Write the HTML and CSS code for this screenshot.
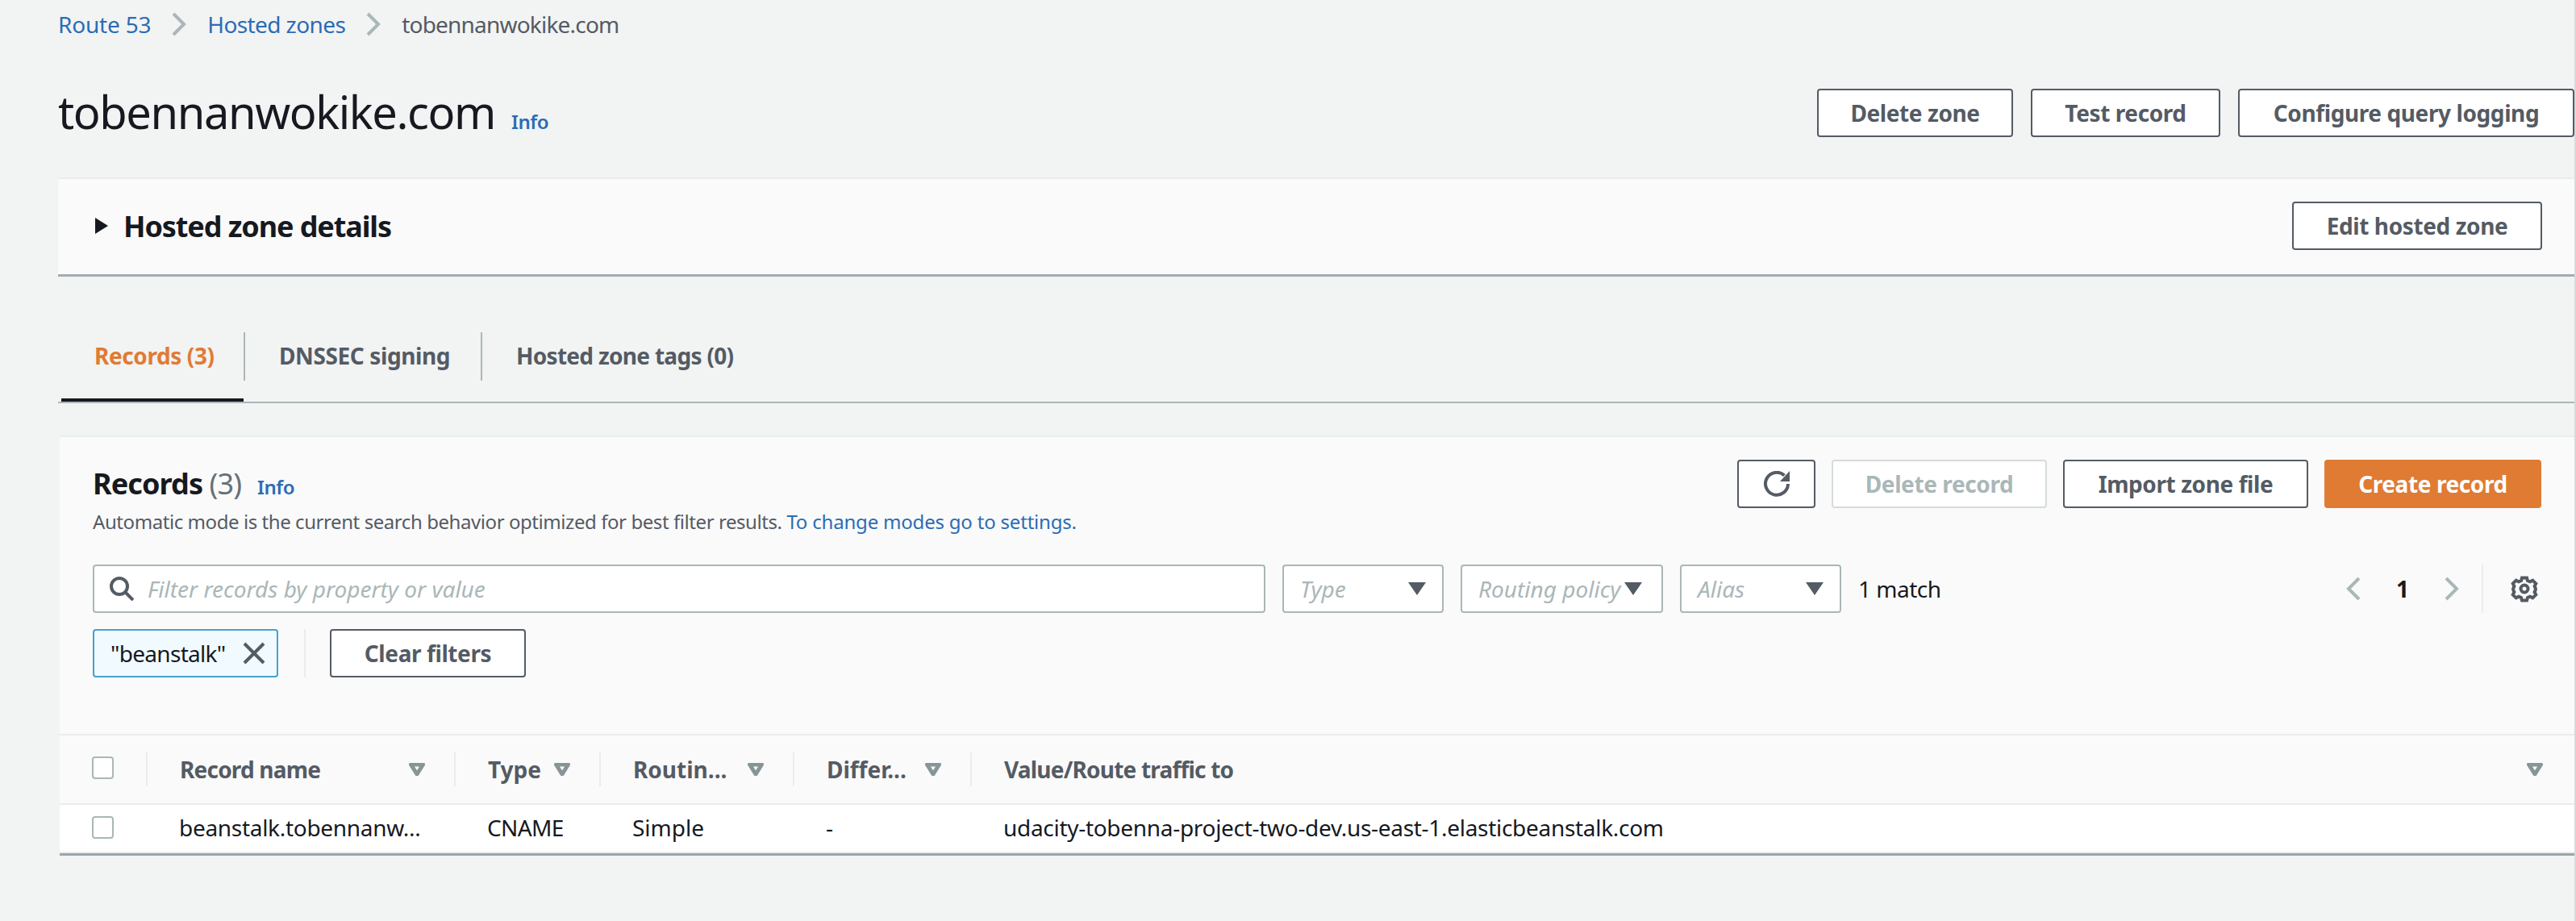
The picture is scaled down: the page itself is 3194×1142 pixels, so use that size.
FILE: index.html
```html
<!DOCTYPE html>
<html lang="en">
<head>
    <meta charset="UTF-8">
    <title>tobennanwokike.com - Route 53</title>
    <link rel="stylesheet" href="styles.css">
</head>
<body>
    <div class="page">
        <nav class="breadcrumb">
            <a href="#" class="crumb-root">Route 53</a>
            <svg class="crumb-sep" viewBox="0 0 20 30"><path d="M3 2l13 13L3 28"/></svg>
            <a href="#" class="crumb-zones">Hosted zones</a>
            <svg class="crumb-sep" viewBox="0 0 20 30"><path d="M3 2l13 13L3 28"/></svg>
            <span class="crumb-current">tobennanwokike.com</span>
        </nav>

        <div class="page-header">
            <div class="title-wrap">
                <h1>tobennanwokike.com</h1>
                <a href="#" class="info">Info</a>
            </div>
            <div class="actions">
                <button class="btn btn-delete-zone">Delete zone</button>
                <button class="btn btn-test">Test record</button>
                <button class="btn btn-logging">Configure query logging</button>
            </div>
        </div>

        <section class="details-panel">
            <div class="details-title">
                <svg class="expand-icon" viewBox="0 0 16 20"><path d="M0 0l16 10L0 20z"/></svg>
                <h2>Hosted zone details</h2>
            </div>
            <button class="btn btn-edit">Edit hosted zone</button>
        </section>

        <div class="tabs">
            <a href="#" class="tab tab-active">Records (3)</a>
            <a href="#" class="tab tab-dnssec">DNSSEC signing</a>
            <a href="#" class="tab tab-tags">Hosted zone tags (0)</a>
        </div>

        <section class="records-card">
            <div class="records-head">
                <div>
                    <div class="records-title">
                        <h2>Records <span class="count">(3)</span></h2>
                        <a href="#" class="info info-small">Info</a>
                    </div>
                    <p class="records-desc">Automatic mode is the current search behavior optimized for best filter results. <a href="#">To change modes go to settings.</a></p>
                </div>
                <div class="records-actions">
                    <button class="btn btn-refresh" aria-label="Refresh">
                        <svg viewBox="0 0 32 32"><path d="M25.500 5.500A14 14 0 1 0 30 16"/><path class="fill" d="M32 0v13H20z"/></svg>
                    </button>
                    <button class="btn btn-disabled">Delete record</button>
                    <button class="btn btn-import">Import zone file</button>
                    <button class="btn btn-primary">Create record</button>
                </div>
            </div>

            <div class="filter-row">
                <div class="search-box">
                    <svg viewBox="0 0 30 30"><circle cx="12" cy="12" r="10"/><path d="M19 19l10 10"/></svg>
                    <span>Filter records by property or value</span>
                </div>
                <div class="select select-type"><span>Type</span><i class="select-caret"></i></div>
                <div class="select select-routing"><span>Routing policy</span><i class="select-caret"></i></div>
                <div class="select select-alias"><span>Alias</span><i class="select-caret"></i></div>
                <span class="match-count">1 match</span>
                <div class="pager">
                    <svg class="pager-arrow" viewBox="0 0 20 30"><path d="M16 2L3 15l13 13"/></svg>
                    <span class="pager-num">1</span>
                    <svg class="pager-arrow" viewBox="0 0 20 30"><path d="M4 2l13 13L4 28"/></svg>
                </div>
                <div class="settings">
                    <svg viewBox="0 0 34 34"><path d="M14 3.500h6l1 3.500 3 1.300 3.300-1.700 4 4-1.700 3.300 1.300 3v1.200l-1.300 3 1.700 3.300-4 4-3.300-1.700-3 1.300-1 3.500h-6l-1-3.500-3-1.300-3.300 1.700-4-4 1.700-3.300-1.300-3v-1.200l1.300-3-1.700-3.300 4-4 3.300 1.700 3-1.300z"/><circle cx="17" cy="17" r="4.500"/></svg>
                </div>
            </div>

            <div class="chip-row">
                <div class="chip">
                    <span>"beanstalk"</span>
                    <svg viewBox="0 0 28 28"><path d="M2 2l24 24M26 2L2 26"/></svg>
                </div>
                <div class="chip-sep"></div>
                <button class="btn btn-clear">Clear filters</button>
            </div>

            <div class="table">
                <div class="table-row table-head">
                    <div class="cell cell-check"><i class="checkbox"></i></div>
                    <div class="cell"><b class="tight">Record name</b><svg class="sort" viewBox="0 0 20 16"><path d="M2.500 2h15L10 14z"/></svg></div>
                    <div class="cell"><b>Type</b><svg class="sort" viewBox="0 0 20 16"><path d="M2.500 2h15L10 14z"/></svg></div>
                    <div class="cell"><b>Routin...</b><svg class="sort" viewBox="0 0 20 16"><path d="M2.500 2h15L10 14z"/></svg></div>
                    <div class="cell"><b>Differ...</b><svg class="sort" viewBox="0 0 20 16"><path d="M2.500 2h15L10 14z"/></svg></div>
                    <div class="cell cell-last"><b class="tight">Value/Route traffic to</b><svg class="sort" viewBox="0 0 20 16"><path d="M2.500 2h15L10 14z"/></svg></div>
                </div>
                <div class="table-row table-body">
                    <div class="cell cell-check"><i class="checkbox"></i></div>
                    <div class="cell"><span class="row-text">beanstalk.tobennanw...</span></div>
                    <div class="cell"><span class="row-cname">CNAME</span></div>
                    <div class="cell"><span>Simple</span></div>
                    <div class="cell"><span>-</span></div>
                    <div class="cell"><span class="row-text">udacity-tobenna-project-two-dev.us-east-1.elasticbeanstalk.com</span></div>
                </div>
            </div>
        </section>
    </div>
</body>
</html>
```

FILE: styles.css
```css
* {
    box-sizing: border-box;
}

html, body {
    margin: 0;
    height: 100%;
}

body {
    background-color: #f2f3f3;
    font-family: "Noto Sans", sans-serif;
    font-size: 28px;
    color: #16191f;
    overflow: hidden;
}

a {
    color: #2b6cb5;
    text-decoration: none;
}

.page {
    padding-left: 72px;
    border-right: 2px solid #d5dbdb;
    height: 100%;
    width: 3194px;
}

/* breadcrumb */
.breadcrumb {
    display: flex;
    align-items: center;
    height: 60px;
    color: #545b64;
}

.crumb-root {
    letter-spacing: -0.2px;
}

.crumb-zones {
    letter-spacing: -0.6px;
}

.crumb-current {
    letter-spacing: -0.8px;
}

.crumb-sep {
    width: 20px;
    height: 30px;
    margin: 0 25px;
}

.crumb-sep path, .pager-arrow path {
    fill: none;
    stroke: #aab7b8;
    stroke-width: 4;
}

/* title row */
.page-header {
    display: flex;
    justify-content: space-between;
    align-items: flex-start;
    height: 160px;
    padding-top: 38px;
}

.title-wrap {
    display: flex;
    align-items: baseline;
    gap: 20px;
}

h1 {
    margin: 0;
    font-size: 56px;
    font-weight: 400;
    line-height: 80px;
    letter-spacing: -1.4px;
}

.info {
    font-size: 24px;
    font-weight: 600;
    letter-spacing: -0.5px;
}

.actions {
    display: flex;
    gap: 22px;
    margin-top: 12px;
}

.btn {
    height: 60px;
    padding: 0;
    border: 2px solid #545b64;
    border-radius: 4px;
    background-color: #fff;
    color: #545b64;
    font-family: inherit;
    font-size: 28px;
    font-weight: 700;
    letter-spacing: -0.4px;
}

.btn-delete-zone { width: 243px; }
.btn-test { width: 235px; }
.btn-logging { width: 417px; }
.btn-edit { width: 310px; }
.btn-import { width: 304px; }
.btn-clear { width: 243px; }

.btn-refresh {
    width: 97px;
    display: flex;
    align-items: center;
    justify-content: center;
}

.btn-refresh svg {
    width: 32px;
    height: 32px;
}

.btn-refresh path {
    fill: none;
    stroke: #545b64;
    stroke-width: 4;
}

.btn-refresh path.fill {
    fill: #545b64;
    stroke: none;
}

.btn-disabled {
    width: 267px;
    border-color: #d5dbdb;
    color: #aab7b8;
}

.btn-primary {
    width: 269px;
    border-color: #e07b33;
    background-color: #e07b33;
    color: #fff;
}

/* hosted zone details */
.details-panel {
    display: flex;
    justify-content: space-between;
    align-items: center;
    height: 123px;
    padding: 0 40px 2px 46px;
    background-color: #fafafa;
    border-top: 2px solid #eaeded;
    border-bottom: 3px solid #a4adb0;
}

.details-title {
    display: flex;
    align-items: center;
    gap: 19px;
}

.expand-icon {
    width: 16px;
    height: 20px;
    fill: #16191f;
}

h2 {
    margin: 0;
    font-size: 36px;
    font-weight: 700;
    letter-spacing: -1.1px;
}

/* tabs */
.tabs {
    display: flex;
    height: 158px;
    padding: 70px 0 0 4px;
    border-bottom: 2px solid #aab7b8;
    margin-top: -1px;
}

.tab {
    display: flex;
    height: 86px;
    line-height: 58px;
    color: #545b64;
    font-weight: 700;
    position: relative;
    letter-spacing: -0.4px;
}

.tab-active {
    width: 226px;
    padding-left: 41px;
    color: #e07b33;
    border-bottom: 4px solid #16191f;
}

.tab-dnssec {
    width: 294px;
    padding-left: 44px;
}

.tab-tags {
    padding-left: 44px;
    letter-spacing: -0.7px;
}

/* separator between tabs */
.tab-dnssec::before, .tab-tags::before {
    content: '';
    position: absolute;
    left: 0;
    top: 0;
    height: 60px;
    border-left: 2px solid #aab7b8;
}

/* records card */
.records-card {
    margin: 40px 0 0 2px;
    background-color: #fafafa;
    border-top: 2px solid #eaeded;
}

.records-head {
    display: flex;
    justify-content: space-between;
    padding: 28px 41px 0 41px;
    height: 158px;
}

.records-title {
    display: flex;
    align-items: baseline;
    gap: 20px;
    height: 60px;
}

.records-title h2 {
    line-height: 60px;
    letter-spacing: -0.9px;
}

.count {
    font-weight: 400;
    color: #687078;
}

.records-desc {
    margin: 0;
    font-size: 24px;
    color: #545b64;
    line-height: 34px;
    letter-spacing: -0.43px;
}

.records-desc a {
    letter-spacing: -0.2px;
}

.records-actions {
    display: flex;
    gap: 20px;
}

.filter-row {
    display: flex;
    align-items: center;
    height: 60px;
    padding: 0 45px 0 41px;
}

.search-box {
    display: flex;
    align-items: center;
    gap: 17px;
    width: 1454px;
    height: 60px;
    padding-left: 19px;
    background-color: #fff;
    border: 2px solid #aab7b8;
    border-radius: 4px;
    color: #aab7b8;
    font-style: italic;
}

.search-box svg {
    width: 30px;
    height: 30px;
    fill: none;
    stroke: #545b64;
    stroke-width: 4;
}

.select {
    display: flex;
    align-items: center;
    justify-content: space-between;
    height: 60px;
    margin-left: 21px;
    padding: 0 20px;
    background-color: #fff;
    border: 2px solid #aab7b8;
    border-radius: 4px;
    color: #aab7b8;
    font-style: italic;
}

.select-type { width: 200px; }
.select-routing { width: 251px; padding-right: 24px; white-space: nowrap; }
.select-alias { width: 200px; }

.select-caret {
    width: 0;
    height: 0;
    border-left: 11px solid transparent;
    border-right: 11px solid transparent;
    border-top: 16px solid #545b64;
}

.match-count {
    margin-left: 21px;
    letter-spacing: -0.5px;
}

.pager {
    display: flex;
    align-items: center;
    margin-left: auto;
}

.pager-arrow {
    width: 20px;
    height: 30px;
}

.pager-num {
    width: 100px;
    text-align: center;
    font-weight: 700;
}

.settings {
    display: flex;
    align-items: center;
    height: 60px;
    margin-left: 28px;
    padding-left: 34px;
    border-left: 2px solid #eaeded;
}

.settings svg {
    width: 34px;
    height: 34px;
    fill: none;
    stroke: #545b64;
    stroke-width: 4;
}

.chip-row {
    display: flex;
    align-items: center;
    height: 60px;
    margin-top: 20px;
    padding-left: 41px;
}

.chip {
    display: flex;
    align-items: center;
    justify-content: space-between;
    width: 230px;
    height: 60px;
    padding: 0 14px 0 20px;
    background-color: #f1faff;
    border: 2px solid #44a3cc;
    border-radius: 4px;
    letter-spacing: -0.7px;
}

.chip svg {
    width: 28px;
    height: 28px;
    fill: none;
    stroke: #545b64;
    stroke-width: 4;
}

.chip-sep {
    height: 60px;
    margin: 0 30px 0 32px;
    border-left: 2px solid #eaeded;
}

/* table */
.table {
    margin-top: 70px;
}

.table-row {
    display: grid;
    grid-template-columns: 109px 382px 180px 240px 220px 1fr;
    align-items: center;
}

.table-head {
    height: 88px;
    border-top: 2px solid #eaeded;
    border-bottom: 2px solid #eaeded;
}

.table-body {
    height: 63px;
    background-color: #fff;
    border-bottom: 3px solid #9aa5a8;
    box-shadow: inset 0 -2px 0 #eaeded;
}

.cell {
    display: flex;
    align-items: center;
    justify-content: space-between;
    min-width: 0;
    padding: 0 36px 0 40px;
    color: #16191f;
    white-space: nowrap;
}

.table-head .cell {
    height: 42px;
    color: #545b64;
    border-right: 2px solid #eaeded;
}

.table-head .cell:last-child {
    border-right: none;
}

.table-body .cell {
    padding: 0 40px 4px 39px;
}

.table-body .cell-check {
    padding: 0 0 0 40px;
}

.tight {
    letter-spacing: -0.8px;
}

.row-text {
    letter-spacing: -0.3px;
}

.row-cname {
    letter-spacing: -0.6px;
}

.table-head .cell-check {
    padding: 0 0 0 40px;
}

.table-head .cell-last {
    padding-right: 39px;
}

.checkbox {
    display: block;
    width: 27px;
    height: 28px;
    margin-bottom: 5px;
    background-color: #fff;
    border: 2px solid #aab7b8;
    border-radius: 4px;
}

.sort {
    width: 20px;
    height: 16px;
    fill: none;
    stroke: #879596;
    stroke-width: 5;
    stroke-linejoin: round;
}
```
